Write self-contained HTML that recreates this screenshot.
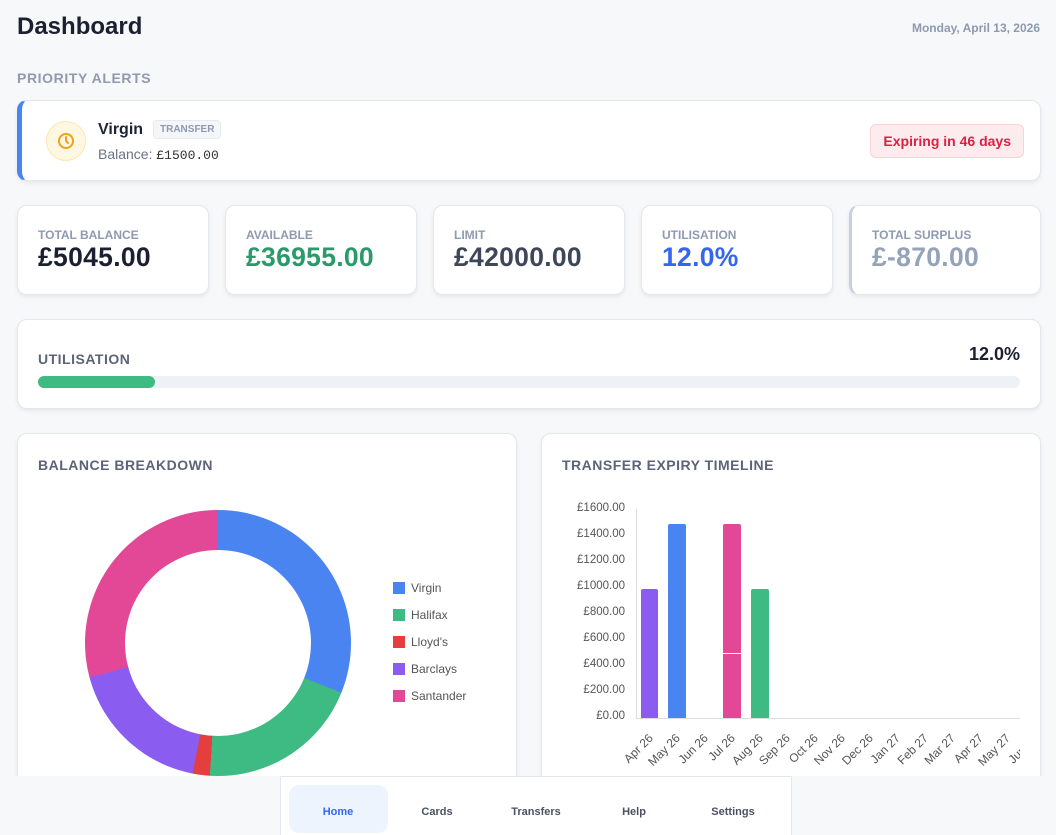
<!DOCTYPE html><html><head><style>
*{box-sizing:border-box;margin:0;padding:0}
body{width:1056px;height:835px;background:#f7f8fa;font-family:"Liberation Sans",sans-serif;position:relative;overflow:hidden;color:#1e2433}
.abs{position:absolute}
.card{position:absolute;background:#fff;border:1px solid #e3e7ee;border-radius:10px;box-shadow:0 2px 4px rgba(0,0,0,.07)}
.lbl{font-size:12px;font-weight:bold;color:#8e9ab0;position:absolute;left:20px;top:22px}
.val{font-size:26.5px;font-weight:bold;position:absolute;left:20px;top:36px;letter-spacing:.3px}
.sec{font-size:14px;font-weight:bold;color:#5b6478;letter-spacing:.5px;position:absolute}
.yl{position:absolute;right:0;font-size:11.5px;color:#555;width:60px;text-align:right}
.xl{position:absolute;font-size:12px;color:#555;transform:rotate(-45deg);transform-origin:right top;white-space:nowrap;text-align:right;width:50px}
.leg{position:absolute;left:393px;font-size:12px;color:#555}
.leg i{display:inline-block;width:12px;height:12px;vertical-align:-2px;margin-right:6px}
.nav{position:absolute;top:806px;font-size:11px;font-weight:bold;color:#4a5163;transform:translateX(-50%)}
</style></head><body>
<div class="abs" style="left:17px;top:13px;font-size:24px;font-weight:bold;color:#1a2030">Dashboard</div>
<div class="abs" style="right:16px;top:21px;font-size:12px;font-weight:bold;color:#8e9ab0">Monday, April 13, 2026</div>
<div class="abs" style="left:17px;top:70px;font-size:14px;font-weight:bold;color:#8e9ab0;letter-spacing:.6px">PRIORITY ALERTS</div>

<div class="card" style="left:17px;top:100px;width:1024px;height:81px;border-left:5px solid #4a84f0;border-radius:10px">
 <div class="abs" style="left:24px;top:20px;width:40px;height:40px;border-radius:50%;background:#fef7e1;border:1px solid #fbe8ae"></div>
 <svg class="abs" style="left:35px;top:31px" width="18" height="18" viewBox="0 0 18 18"><circle cx="9" cy="9" r="7" fill="none" stroke="#f0a21a" stroke-width="2"/><path d="M9 5v4l2 2" fill="none" stroke="#f0a21a" stroke-width="2" stroke-linecap="round"/></svg>
 <div class="abs" style="left:76px;top:20px;font-size:16px;font-weight:bold;color:#1e2433">Virgin</div>
 <div class="abs" style="left:131px;top:19px;padding:3px 6px;background:#f4f6f9;border:1px solid #e6eaf0;border-radius:4px;font-size:10px;font-weight:bold;color:#8e9ab0">TRANSFER</div>
 <div class="abs" style="left:76px;top:45px;font-size:14px;color:#6a7386">Balance: <span style="font-family:'Liberation Mono',monospace;font-size:13px;color:#333">£1500.00</span></div>
 <div class="abs" style="right:16px;top:23px;padding:8px 12px;background:#fdecee;border:1px solid #f8d3d8;border-radius:6px;font-size:14px;font-weight:bold;color:#dc1f43">Expiring in 46 days</div>
</div>

<div class="card" style="left:17px;top:205px;width:192px;height:90px"><div class="lbl">TOTAL BALANCE</div><div class="val" style="color:#1a2030">£5045.00</div></div>
<div class="card" style="left:225px;top:205px;width:192px;height:90px"><div class="lbl">AVAILABLE</div><div class="val" style="color:#2b9a6a">£36955.00</div></div>
<div class="card" style="left:433px;top:205px;width:192px;height:90px"><div class="lbl">LIMIT</div><div class="val" style="color:#3e4759">£42000.00</div></div>
<div class="card" style="left:641px;top:205px;width:192px;height:90px"><div class="lbl">UTILISATION</div><div class="val" style="color:#3566ee">12.0%</div></div>
<div class="card" style="left:849px;top:205px;width:192px;height:90px;border-left:3px solid #c7d0de"><div class="lbl">TOTAL SURPLUS</div><div class="val" style="color:#94a3b8">£-870.00</div></div>

<div class="card" style="left:17px;top:319px;width:1024px;height:90px">
 <div class="sec" style="left:20px;top:31px">UTILISATION</div>
 <div class="abs" style="right:20px;top:24px;font-size:18px;font-weight:bold;color:#1a2030">12.0%</div>
 <div class="abs" style="left:20px;top:56px;width:982px;height:12px;border-radius:6px;background:#eef1f5"><div style="width:117px;height:12px;border-radius:6px;background:#3dbb82"></div></div>
</div>

<div class="card" style="left:17px;top:433px;width:500px;height:380px;border-radius:10px">
 <div class="sec" style="left:20px;top:23px">BALANCE BREAKDOWN</div>
</div>
<div class="abs" style="left:85px;top:510px;width:266px;height:266px;border-radius:50%;background:conic-gradient(#4a84f0 0 112deg,#3dbb82 112deg 183.5deg,#e53e3e 183.5deg 191deg,#8b5cf0 191deg 255deg,#e24896 255deg 360deg)"></div>
<div class="abs" style="left:125px;top:550px;width:186px;height:186px;border-radius:50%;background:#fff"></div>
<div class="leg" style="top:581px"><i style="background:#4a84f0"></i>Virgin</div>
<div class="leg" style="top:608px"><i style="background:#3dbb82"></i>Halifax</div>
<div class="leg" style="top:635px"><i style="background:#e53e3e"></i>Lloyd's</div>
<div class="leg" style="top:662px"><i style="background:#8b5cf0"></i>Barclays</div>
<div class="leg" style="top:689px"><i style="background:#e24896"></i>Santander</div>

<div class="card" style="left:541px;top:433px;width:500px;height:380px">
 <div class="sec" style="left:20px;top:23px">TRANSFER EXPIRY TIMELINE</div>
</div>
<div class="abs" style="left:565px;top:502px;width:60px;height:230px">
 <div class="yl" style="top:0">£1600.00</div><div class="yl" style="top:26px">£1400.00</div><div class="yl" style="top:52px">£1200.00</div><div class="yl" style="top:78px">£1000.00</div><div class="yl" style="top:104px">£800.00</div><div class="yl" style="top:130px">£600.00</div><div class="yl" style="top:156px">£400.00</div><div class="yl" style="top:182px">£200.00</div><div class="yl" style="top:208px">£0.00</div>
</div>
<div class="abs" style="left:636px;top:509px;width:1px;height:210px;background:#ddd"></div>
<div class="abs" style="left:636px;top:718px;width:384px;height:1px;background:#ddd"></div>
<div class="abs" style="left:641px;top:589px;width:17px;height:129px;background:#8b5cf0;border-radius:2px 2px 0 0"></div>
<div class="abs" style="left:668px;top:524px;width:18px;height:194px;background:#4a84f0;border-radius:2px 2px 0 0"></div>
<div class="abs" style="left:723px;top:524px;width:18px;height:194px;background:#e24896;border-radius:2px 2px 0 0"></div>
<div class="abs" style="left:723px;top:653px;width:18px;height:1px;background:#fff"></div>
<div class="abs" style="left:751px;top:589px;width:18px;height:129px;background:#3dbb82;border-radius:2px 2px 0 0"></div>
<div class="abs" style="left:0;top:0">
<div class="xl" style="left:596px;top:731px">Apr 26</div><div class="xl" style="left:623px;top:731px">May 26</div><div class="xl" style="left:651px;top:731px">Jun 26</div><div class="xl" style="left:678px;top:731px">Jul 26</div><div class="xl" style="left:706px;top:731px">Aug 26</div><div class="xl" style="left:733px;top:731px">Sep 26</div><div class="xl" style="left:761px;top:731px">Oct 26</div><div class="xl" style="left:788px;top:731px">Nov 26</div><div class="xl" style="left:816px;top:731px">Dec 26</div><div class="xl" style="left:843px;top:731px">Jan 27</div><div class="xl" style="left:871px;top:731px">Feb 27</div><div class="xl" style="left:898px;top:731px">Mar 27</div><div class="xl" style="left:926px;top:731px">Apr 27</div><div class="xl" style="left:953px;top:731px">May 27</div><div class="xl" style="left:981px;top:731px">Jun 27</div>
</div>
<div class="abs" style="left:1020px;top:722px;width:20px;height:54px;background:#fff"></div>
<div class="abs" style="left:0;top:776px;width:1056px;height:59px;background:#f7f8fa"></div>
<div class="abs" style="left:280px;top:776px;width:512px;height:59px;background:#fff;border:1px solid #e3e7ee;border-bottom:none"></div>
<div class="abs" style="left:289px;top:785px;width:99px;height:48px;background:#eef4fe;border-radius:10px"></div>
<div class="nav" style="left:338px;color:#3566ee">Home</div>
<div class="nav" style="left:437px">Cards</div>
<div class="nav" style="left:536px">Transfers</div>
<div class="nav" style="left:634px">Help</div>
<div class="nav" style="left:733px">Settings</div>
</body></html>
